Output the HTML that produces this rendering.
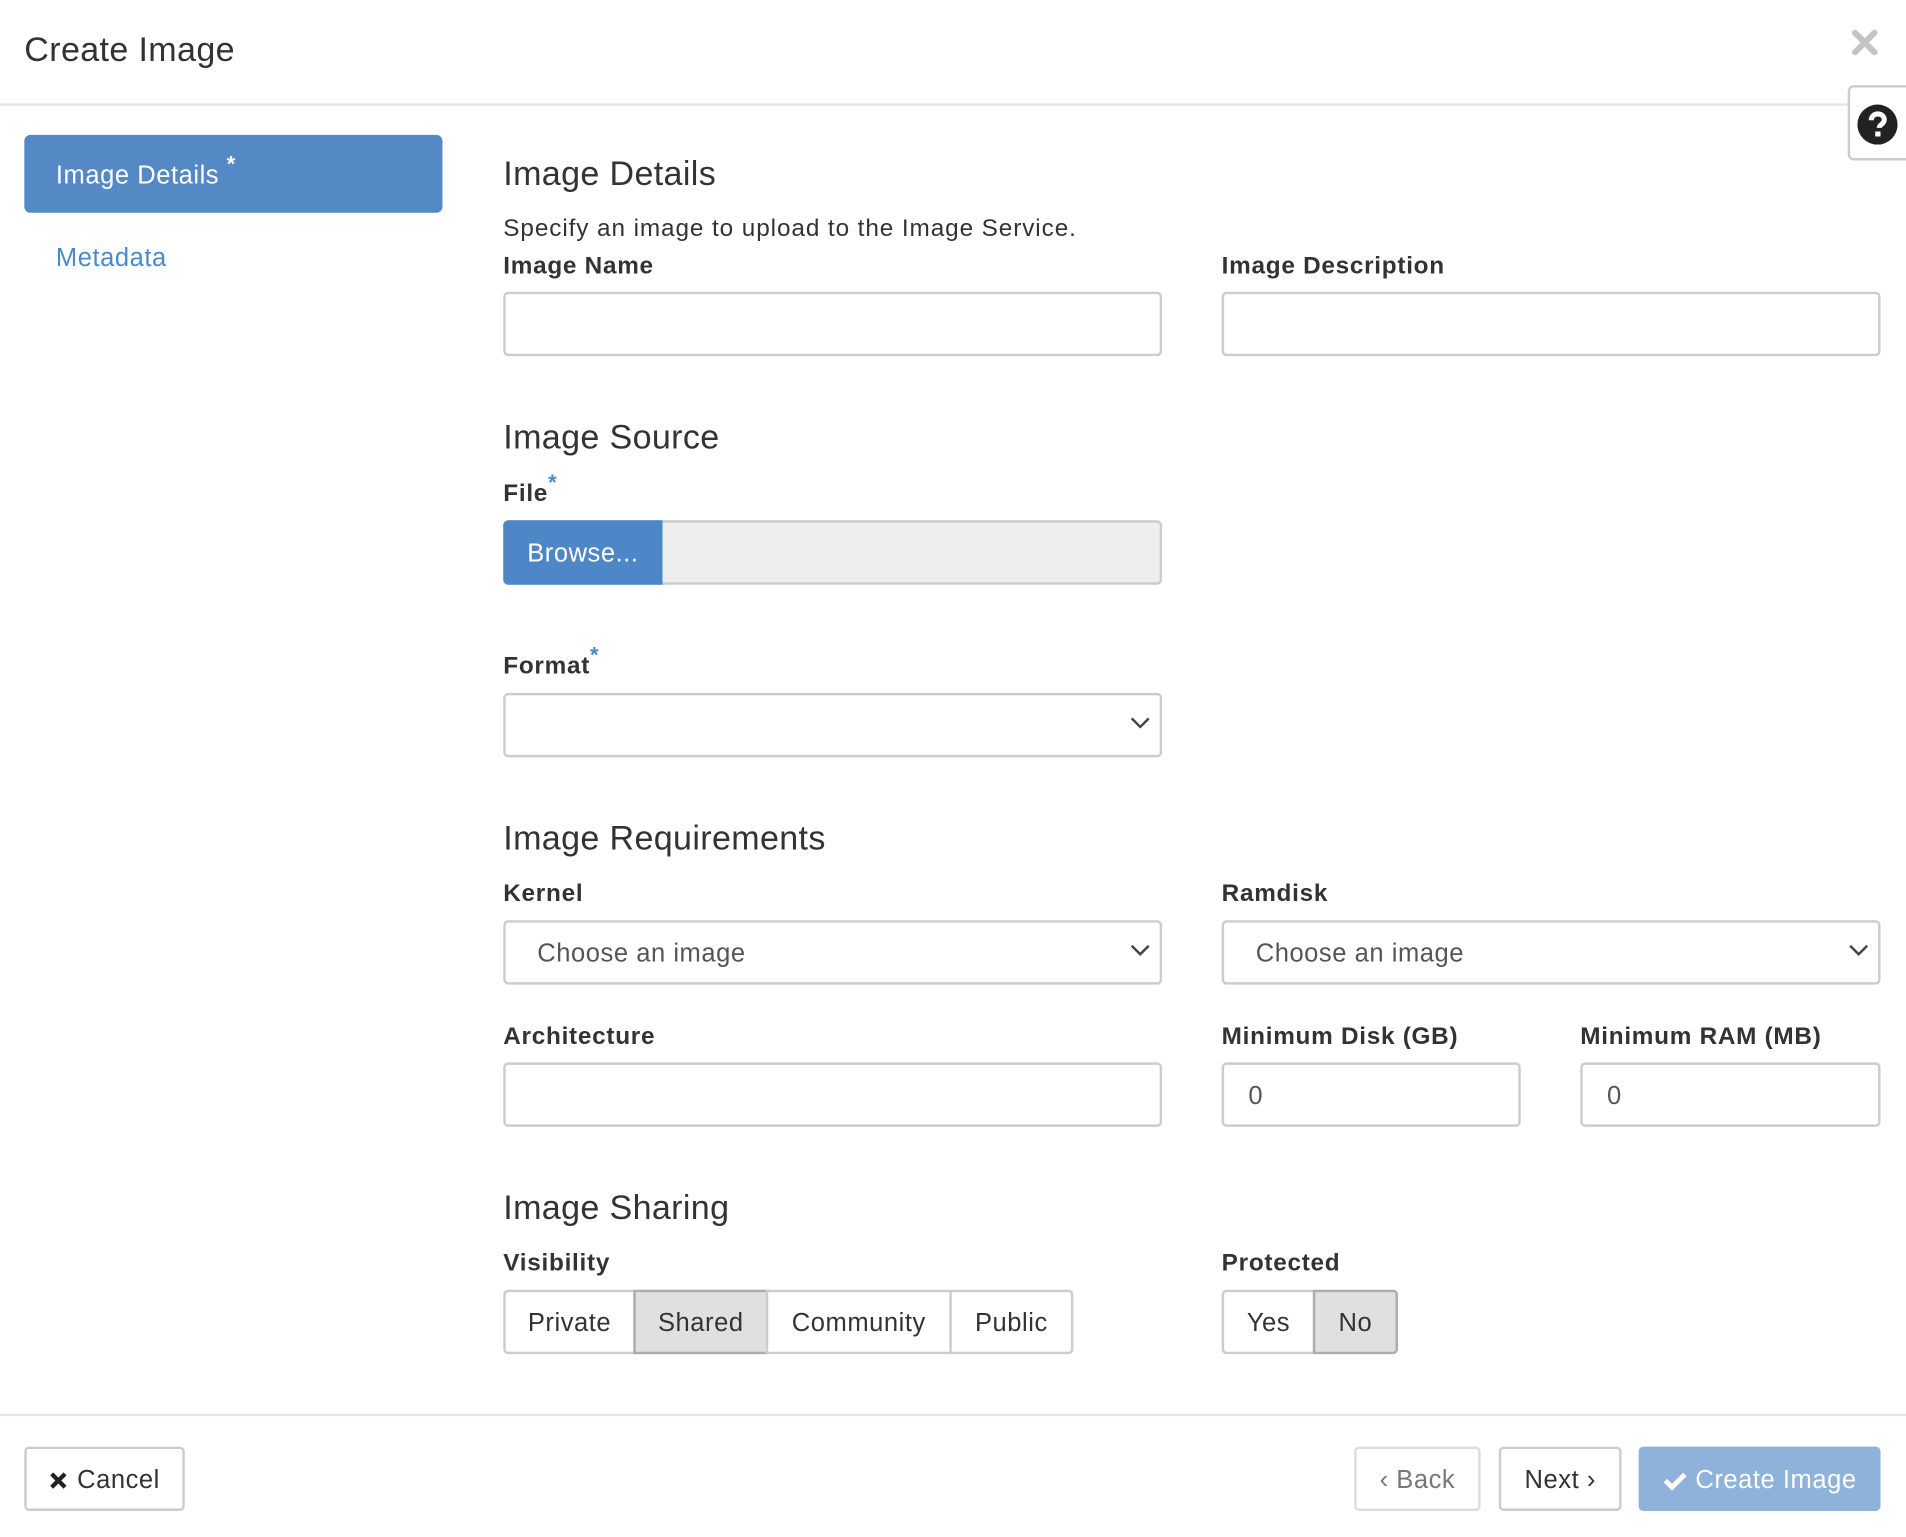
<!DOCTYPE html>
<html><head><meta charset="utf-8"><style>
html,body{margin:0;padding:0;width:1906px;height:1536px;overflow:hidden;background:#fff}
#w{position:absolute;left:0;top:0;width:1568px;height:1264px;transform:scale(1.2156);transform-origin:0 0;font-family:"Liberation Sans",Helvetica,Arial,sans-serif;color:#333;letter-spacing:0.45px}
.a{position:absolute}
.t{margin-top:2px}
.h{font-size:28px;color:#333;letter-spacing:0.3px}
.lb{font-size:20px;font-weight:bold;color:#333;letter-spacing:0.6px}
.in{position:absolute;box-sizing:border-box;border:2px solid #ccc;border-radius:4px;background:#fff;height:53px}
.ph{font-size:21px;color:#555;position:absolute;top:14px}
.chev{position:absolute;right:8px;top:18px}
.btn{position:absolute;box-sizing:border-box;border:2px solid #ccc;background:#fff;height:53px;font-size:21px;display:flex;align-items:center;justify-content:center;color:#333;padding-top:2px}
.req{color:#4a8acb;font-size:18px;vertical-align:top;position:relative;top:-8px;font-weight:bold}
</style></head><body><div id="w">
<div class="a" style="left:20px;top:25px;font-size:28px;color:#333;letter-spacing:0.3px">Create Image</div>
<svg class="a" style="left:1523px;top:24px" width="22" height="22" viewBox="0 0 22 22"><path d="M3 3L19 19M19 3L3 19" stroke="#c4c4c4" stroke-width="5" stroke-linecap="round"/></svg>
<div class="a" style="left:0;top:85px;width:1520px;height:2px;background:#e5e5e5"></div>
<div class="a" style="left:1520px;top:70px;width:52px;height:62px;box-sizing:border-box;border:2px solid #ccc;border-radius:5px 0 0 5px;background:#fff"></div>
<svg class="a" style="left:1528px;top:86px" width="33" height="33" viewBox="0 0 32 32"><circle cx="16" cy="16" r="16" fill="#222"/><path d="M11 12.5c0-3 2.3-5 5.2-5 3 0 5.2 2 5.2 4.6 0 3.5-4 3.8-4 6.5" stroke="#fff" stroke-width="4" fill="none"/><rect x="14.2" y="21.5" width="4.2" height="4" fill="#fff"/></svg>

<div class="a" style="left:20px;top:111px;width:344px;height:64px;background:#5589c6;border-radius:5px"></div>
<div class="a" style="left:46px;top:133px;font-size:21px;color:#fff">Image Details <span style="font-size:18px;position:relative;top:-10px;font-weight:bold">*</span></div>
<div class="a" style="left:46px;top:201px;font-size:21px;color:#4a8acb">Metadata</div>

<div class="a h" style="left:414px;top:127px">Image Details</div>
<div class="a" style="left:414px;top:177px;font-size:20px;letter-spacing:0.75px">Specify an image to upload to the Image Service.</div>
<div class="a lb" style="left:414px;top:208px">Image Name</div>
<div class="a lb" style="left:1005px;top:208px">Image Description</div>
<div class="in" style="left:414px;top:240px;width:542px"></div>
<div class="in" style="left:1005px;top:240px;width:542px"></div>

<div class="a h" style="left:414px;top:344px">Image Source</div>
<div class="a lb" style="left:414px;top:395px">File<span class="req">*</span></div>
<div class="a" style="left:414px;top:428px;width:542px;height:53px;box-sizing:border-box;border:2px solid #ccc;border-radius:4px;background:#eee"></div>
<div class="a" style="left:414px;top:428px;width:131px;height:53px;background:#4d87c7;border-radius:4px 0 0 4px;color:#fff;font-size:21px;display:flex;align-items:center;justify-content:center;padding-top:2px;box-sizing:border-box">Browse...</div>

<div class="a lb" style="left:414px;top:537px">Format<span class="req">*</span></div>
<div class="in" style="left:414px;top:570px;width:542px"><svg class="chev" width="16" height="10" viewBox="0 0 16 10"><path d="M1 1l7 7 7-7" stroke="#444" stroke-width="2" fill="none"/></svg></div>

<div class="a h" style="left:414px;top:674px">Image Requirements</div>
<div class="a lb" style="left:414px;top:724px">Kernel</div>
<div class="a lb" style="left:1005px;top:724px">Ramdisk</div>
<div class="in" style="left:414px;top:757px;width:542px"><span class="ph" style="left:26px">Choose an image</span><svg class="chev" width="16" height="10" viewBox="0 0 16 10"><path d="M1 1l7 7 7-7" stroke="#444" stroke-width="2" fill="none"/></svg></div>
<div class="in" style="left:1005px;top:757px;width:542px"><span class="ph" style="left:26px">Choose an image</span><svg class="chev" width="16" height="10" viewBox="0 0 16 10"><path d="M1 1l7 7 7-7" stroke="#444" stroke-width="2" fill="none"/></svg></div>

<div class="a lb" style="left:414px;top:842px">Architecture</div>
<div class="a lb" style="left:1005px;top:842px">Minimum Disk (GB)</div>
<div class="a lb" style="left:1300px;top:842px">Minimum RAM (MB)</div>
<div class="in" style="left:414px;top:874px;width:542px"></div>
<div class="in" style="left:1005px;top:874px;width:246px"><span class="ph" style="left:20px">0</span></div>
<div class="in" style="left:1300px;top:874px;width:247px"><span class="ph" style="left:20px">0</span></div>

<div class="a h" style="left:414px;top:978px">Image Sharing</div>
<div class="a lb" style="left:414px;top:1028px">Visibility</div>
<div class="a lb" style="left:1005px;top:1028px">Protected</div>
<div class="btn" style="left:414px;top:1061px;width:109px;border-radius:4px 0 0 4px">Private</div>
<div class="btn" style="left:521px;top:1061px;width:111px;background:#e0e0e0;border-color:#adadad">Shared</div>
<div class="btn" style="left:630px;top:1061px;width:153px">Community</div>
<div class="btn" style="left:781px;top:1061px;width:102px;border-radius:0 4px 4px 0">Public</div>
<div class="btn" style="left:1005px;top:1061px;width:77px;border-radius:4px 0 0 4px">Yes</div>
<div class="btn" style="left:1080px;top:1061px;width:70px;background:#e0e0e0;border-color:#adadad;border-radius:0 4px 4px 0">No</div>

<div class="a" style="left:0;top:1163px;width:1568px;height:2px;background:#e5e5e5"></div>
<div class="btn" style="left:20px;top:1190px;width:132px;border-radius:4px"><svg width="16" height="16" viewBox="0 0 16 16" style="margin-right:7px"><path d="M2.5 2.5L13.5 13.5M13.5 2.5L2.5 13.5" stroke="#222" stroke-width="3.5"/></svg>Cancel</div>
<div class="btn" style="left:1114px;top:1190px;width:104px;border-radius:4px;color:#777;border-color:#ddd">‹ Back</div>
<div class="btn" style="left:1233px;top:1190px;width:101px;border-radius:4px">Next ›</div>
<div class="btn" style="left:1348px;top:1190px;width:199px;border-radius:4px;background:#8fb2da;border-color:#8fb2da;color:#fff"><svg width="20" height="16" viewBox="0 0 20 16" style="margin-right:7px"><path d="M2 8l5.5 5.5L18 3" stroke="#fff" stroke-width="4" fill="none"/></svg>Create Image</div>
</div></body></html>
